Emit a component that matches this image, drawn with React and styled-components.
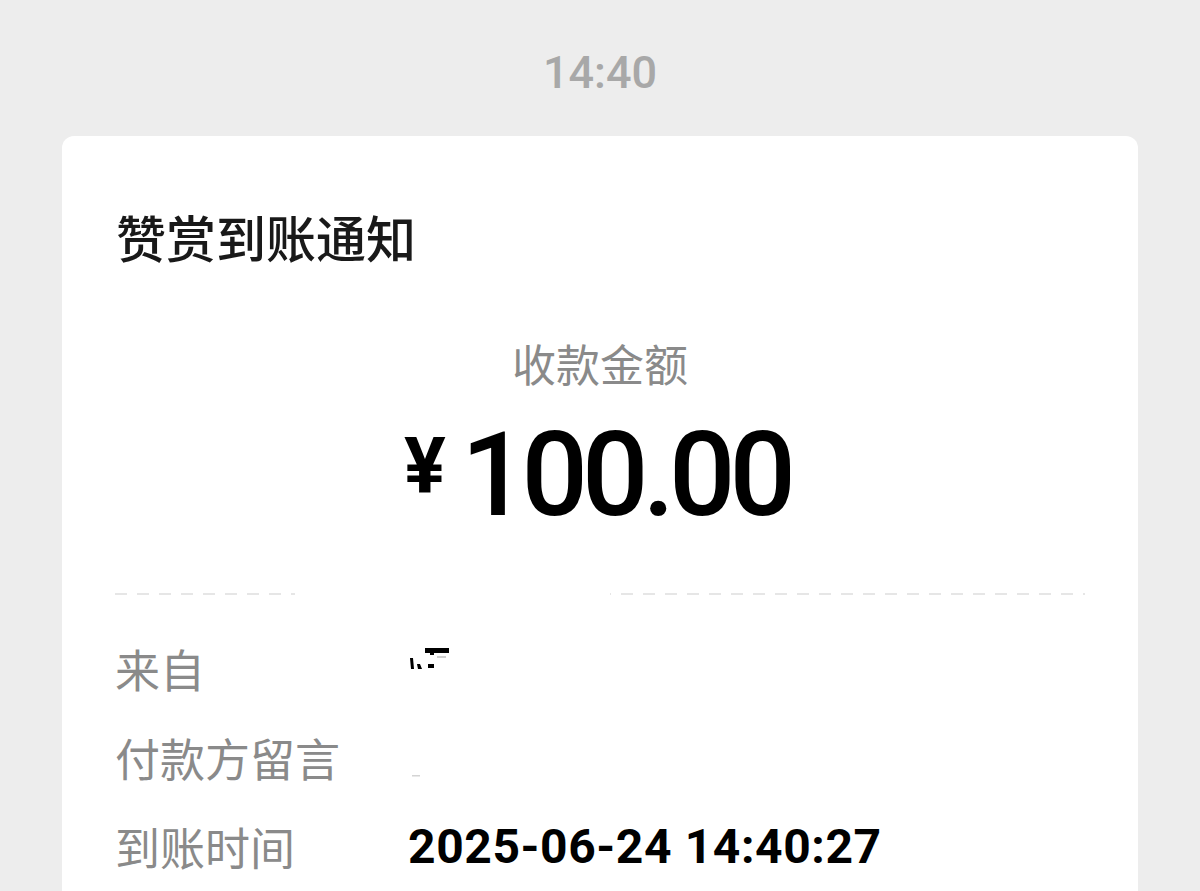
import React from 'react';
import styled, { createGlobalStyle } from 'styled-components';

const GlobalStyle = createGlobalStyle`
  html, body {
    margin: 0;
    padding: 0;
    background: #ededed;
  }
  body {
    height: 891px;
    overflow: hidden;
    font-family: "Noto Sans CJK SC", "Noto Sans", sans-serif;
  }
`;

const Page = styled.div`
  display: flex;
  flex-direction: column;
  align-items: center;
  padding-top: 51px;
`;

const TimeStamp = styled.div`
  font-family: Roboto, "Noto Sans", sans-serif;
  font-weight: 500;
  font-size: 45px;
  line-height: 44px;
  color: #a8a8a8;
`;

const Card = styled.div`
  box-sizing: border-box;
  width: 1076px;
  min-height: 800px;
  margin-top: 41px;
  padding: 75px 53px 0;
  background: #fff;
  border-radius: 12px;
`;

const Title = styled.div`
  font-size: 50px;
  line-height: 50px;
  font-weight: 500;
  color: #191919;
  margin-left: 1px;
`;

const Amount = styled.div`
  display: flex;
  flex-direction: column;
  align-items: center;
  margin-top: 80px;
`;

const AmountLabel = styled.div`
  font-size: 44px;
  line-height: 44px;
  color: #8a8a8a;
`;

const AmountValue = styled.div`
  display: flex;
  align-items: flex-start;
  margin-top: 32px;
  margin-right: 6px;
  font-family: Roboto, "Noto Sans", sans-serif;
  color: #000;
`;

const Currency = styled.span`
  font-size: 78px;
  line-height: 74px;
  font-weight: 700;
  margin-top: 13px;
  margin-right: 15px;
`;

const Digits = styled.span`
  font-size: 117px;
  line-height: 117px;
  font-weight: 500;
  letter-spacing: -6px;
`;

const DividerWrap = styled.div`
  position: relative;
  margin-top: 59px;
`;

const Divider = styled.div`
  height: 2px;
  background: repeating-linear-gradient(to right, #e6e6e6 0 12px, transparent 12px 22px);
`;

const Mask = styled.div`
  position: absolute;
  top: -2px;
  left: 180px;
  width: 315px;
  height: 6px;
  background: #fff;
`;

const Rows = styled.div`
  margin-top: 29px;
  display: flex;
  flex-direction: column;
`;

const Row = styled.div`
  display: flex;
  align-items: center;
  height: 89px;
`;

const Label = styled.div`
  width: 293px;
  flex-shrink: 0;
  font-size: 45px;
  line-height: 45px;
  color: #8a8a8a;
`;

const Value = styled.div`
  display: flex;
  align-items: center;
  height: 100%;
  font-family: Roboto, "Noto Sans", sans-serif;
  font-weight: 700;
  font-size: 48px;
  line-height: 48px;
  letter-spacing: 0.6px;
  color: #000;
`;

const RedactedFrom = () => (
  <svg width="50" height="89" viewBox="0 0 50 89">
    <rect x="17" y="24" width="24" height="5" fill="#000" />
    <rect x="22" y="29" width="4" height="2" fill="#000" />
    <polygon points="2,34 5,34 6,45 3,45" fill="#000" />
    <polygon points="9,40 12,40 14,45 10,45" fill="#000" />
    <rect x="20" y="40" width="6" height="4" fill="#000" />
    <rect x="29" y="32" width="9" height="2" fill="#cfcfcf" />
  </svg>
);

const RedactedNote = () => (
  <svg width="50" height="89" viewBox="0 0 50 89">
    <rect x="4" y="62" width="8" height="1.5" fill="#d4d4d4" />
  </svg>
);

const rows = [
  { label: '来自', value: <RedactedFrom /> },
  { label: '付款方留言', value: <RedactedNote /> },
  { label: '到账时间', value: '2025-06-24 14:40:27' },
];

export default function App() {
  return (
    <Page>
      <GlobalStyle />
      <TimeStamp>14:40</TimeStamp>
      <Card>
        <Title>赞赏到账通知</Title>
        <Amount>
          <AmountLabel>收款金额</AmountLabel>
          <AmountValue>
            <Currency>¥</Currency>
            <Digits>100.00</Digits>
          </AmountValue>
        </Amount>
        <DividerWrap>
          <Divider />
          <Mask />
        </DividerWrap>
        <Rows>
          {rows.map(row => (
            <Row key={row.label}>
              <Label>{row.label}</Label>
              <Value>{row.value}</Value>
            </Row>
          ))}
        </Rows>
      </Card>
    </Page>
  );
}
